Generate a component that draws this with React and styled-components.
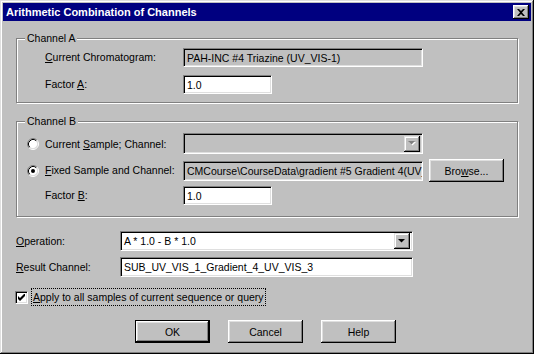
import React from "react";
import styled, { createGlobalStyle } from "styled-components";

const GlobalStyle = createGlobalStyle`
  html, body {
    margin: 0;
    padding: 0;
    background: #c0c0c0;
  }
  body {
    font-family: "Liberation Sans", Arial, sans-serif;
    font-size: 10.5px;
    color: #000;
  }
`;

const Window = styled.div`
  width: 534px;
  height: 354px;
  box-sizing: border-box;
  padding: 3px;
  background: #c0c0c0;
  box-shadow: inset -1px -1px #000, inset 1px 1px #dfdfdf,
    inset -2px -2px #808080, inset 2px 2px #fff;
  display: flex;
  flex-direction: column;
`;

const TitleBar = styled.div`
  height: 18px;
  background: #000080;
  display: flex;
  align-items: center;
  justify-content: space-between;
  padding: 0 2px 0 3px;
`;

const Title = styled.span`
  color: #fff;
  font-weight: bold;
  font-size: 11px;
`;

const CloseButton = styled.div`
  width: 16px;
  height: 14px;
  box-sizing: border-box;
  background: #c0c0c0;
  box-shadow: inset -1px -1px #000, inset 1px 1px #fff,
    inset -2px -2px #808080, inset 2px 2px #dfdfdf;
  display: flex;
  align-items: center;
  justify-content: center;
`;

const Body = styled.div`
  padding: 0 13px;
  display: flex;
  flex-direction: column;
`;

const Group = styled.div`
  margin-top: ${(p) => p.$top}px;
  border: 1px solid #808080;
  box-shadow: inset 1px 1px #fff, 1px 1px #fff;
  padding: 0 0 ${(p) => p.$bottom}px 10px;
`;

const Legend = styled.div`
  margin: -7px 0 0 -2px;
  padding: 0 2px;
  width: fit-content;
  line-height: 13px;
  background: #c0c0c0;
`;

const Rows = styled.div`
  margin-top: ${(p) => p.$top}px;
  display: flex;
  flex-direction: column;
  gap: ${(p) => p.$gap}px;
`;

const Row = styled.div`
  display: grid;
  grid-template-columns: 18px 138px max-content max-content;
  justify-content: start;
  align-items: center;
  height: ${(p) => p.$h || 19}px;
`;

const OuterRow = styled.div`
  display: grid;
  grid-template-columns: 104px max-content;
  justify-content: start;
  align-items: center;
`;

const Label = styled.span`
  line-height: 13px;
  white-space: nowrap;
`;

const Field = styled.div`
  width: ${(p) => p.$w}px;
  height: ${(p) => p.$h || 19}px;
  box-sizing: border-box;
  background: ${(p) => (p.$readOnly ? "#c0c0c0" : "#fff")};
  border-top: 1px solid #808080;
  border-left: 1px solid #808080;
  border-bottom: 1px solid #fff;
  border-right: 1px solid #fff;
  box-shadow: inset 1px 1px #000, inset -1px -1px #dfdfdf;
  padding: 0 2px 0 3px;
  display: flex;
  align-items: center;
  white-space: nowrap;
  overflow: hidden;
  align-self: ${(p) => p.$align || "center"};
`;

const Combo = styled(Field)`
  padding-right: 2px;
  justify-content: space-between;
`;

const ArrowButton = styled.div`
  width: 16px;
  height: 16px;
  box-sizing: border-box;
  background: #c0c0c0;
  box-shadow: inset -1px -1px #000, inset 1px 1px #dfdfdf,
    inset -2px -2px #808080, inset 2px 2px #fff;
  display: flex;
  align-items: center;
  justify-content: center;
  flex-shrink: 0;
`;

const Button = styled.div`
  width: ${(p) => p.$w || 75}px;
  height: 23px;
  box-sizing: border-box;
  background: #c0c0c0;
  border: ${(p) => (p.$default ? "1px solid #000" : "none")};
  box-shadow: inset -1px -1px #000, inset 1px 1px #fff,
    inset -2px -2px #808080, inset 2px 2px #dfdfdf;
  display: flex;
  align-items: center;
  justify-content: center;
  white-space: pre;
  margin-left: ${(p) => p.$ml || 0}px;
`;

const CheckRow = styled.div`
  margin-top: 11px;
  display: flex;
  align-items: center;
  gap: 4px;
  height: 18px;
`;

const CheckBox = styled.div`
  width: 13px;
  height: 13px;
  box-sizing: border-box;
  background: #fff;
  border-top: 1px solid #808080;
  border-left: 1px solid #808080;
  border-bottom: 1px solid #fff;
  border-right: 1px solid #fff;
  box-shadow: inset 1px 1px #000, inset -1px -1px #dfdfdf;
  display: flex;
  align-items: center;
  justify-content: center;
  margin-left: -1px;
`;

const FocusLabel = styled.span`
  outline: 1px dotted #000;
  padding: 2px 1px 1px 1px;
  line-height: 13px;
`;

const ButtonBar = styled.div`
  margin-top: 14px;
  display: flex;
  gap: 18px;
  padding-left: 119px;
`;

const Radio = ({ checked }) => (
  <svg width="12" height="12" viewBox="0 0 12 12">
    <circle cx="6" cy="6" r="4.5" fill="#fff" />
    <path d="M2.11 9.89 A5.5 5.5 0 0 1 9.89 2.11" fill="none" stroke="#808080" />
    <path d="M9.89 2.11 A5.5 5.5 0 0 1 2.11 9.89" fill="none" stroke="#fff" />
    <path d="M2.82 9.18 A4.5 4.5 0 0 1 9.18 2.82" fill="none" stroke="#000" />
    <path d="M9.18 2.82 A4.5 4.5 0 0 1 2.82 9.18" fill="none" stroke="#dfdfdf" />
    {checked && <circle cx="6" cy="6" r="2" fill="#000" />}
  </svg>
);

const Arrow = ({ disabled }) => (
  <svg width="8" height="5" viewBox="0 0 8 5">
    {disabled && <path d="M1 1 H8 L4.5 4.5 Z" fill="#fff" />}
    <path d="M0 0 H7 L3.5 3.5 Z" fill={disabled ? "#808080" : "#000"} />
  </svg>
);

const App = () => (
  <>
    <GlobalStyle />
    <Window>
      <TitleBar>
        <Title>Arithmetic Combination of Channels</Title>
        <CloseButton>
          <svg width="8" height="7" viewBox="0 0 8 7">
            <path d="M0 0 H2 L4 2 L6 0 H8 L5 3.5 L8 7 H6 L4 5 L2 7 H0 L3 3.5 Z" fill="#000" />
          </svg>
        </CloseButton>
      </TitleBar>
      <Body>
        <Group $top={17} $bottom={8}>
          <Legend>Channel A</Legend>
          <Rows $top={3} $gap={8}>
            <Row>
              <span />
              <Label><u>C</u>urrent Chromatogram:</Label>
              <Field $w={240} $readOnly>PAH-INC #4 Triazine (UV_VIS-1)</Field>
            </Row>
            <Row>
              <span />
              <Label>Factor <u>A</u>:</Label>
              <Field $w={89}>1.0</Field>
            </Row>
          </Rows>
        </Group>

        <Group $top={18} $bottom={11}>
          <Legend>Channel B</Legend>
          <Rows $top={5} $gap={4}>
            <Row $h={22}>
              <Radio />
              <Label>Current <u>S</u>ample; Channel:</Label>
              <Combo $w={240} $h={21} $align="start" $readOnly>
                <span />
                <ArrowButton>
                  <Arrow disabled />
                </ArrowButton>
              </Combo>
            </Row>
            <Row $h={23}>
              <Radio checked />
              <Label><u>F</u>ixed Sample and Channel:</Label>
              <Field $w={240} $h={20} $readOnly>
                CMCourse\CourseData\gradient #5 Gradient 4(UV_VIS-3)
              </Field>
              <Button $ml={6}>Bro<u>w</u>se...</Button>
            </Row>
            <Row>
              <span />
              <Label>Factor <u>B</u>:</Label>
              <Field $w={89}>1.0</Field>
            </Row>
          </Rows>
        </Group>

        <Rows $top={14} $gap={6}>
          <OuterRow>
            <Label><u>O</u>peration:</Label>
            <Combo $w={293} $h={20}>
              <span>A * 1.0 - B * 1.0</span>
              <ArrowButton>
                <Arrow />
              </ArrowButton>
            </Combo>
          </OuterRow>
          <OuterRow>
            <Label><u>R</u>esult Channel:</Label>
            <Field $w={293} $h={20}>SUB_UV_VIS_1_Gradient_4_UV_VIS_3</Field>
          </OuterRow>
        </Rows>

        <CheckRow>
          <CheckBox>
            <svg width="7" height="7" viewBox="0 0 7 7">
              <path d="M0 2 L2 4 L7 -1 V2 L2 7 L0 5 Z" fill="#000" />
            </svg>
          </CheckBox>
          <FocusLabel>
            <u>A</u>pply to all samples of current sequence or query
          </FocusLabel>
        </CheckRow>

        <ButtonBar>
          <Button $default>OK</Button>
          <Button>Cancel</Button>
          <Button>Help</Button>
        </ButtonBar>
      </Body>
    </Window>
  </>
);

export default App;
